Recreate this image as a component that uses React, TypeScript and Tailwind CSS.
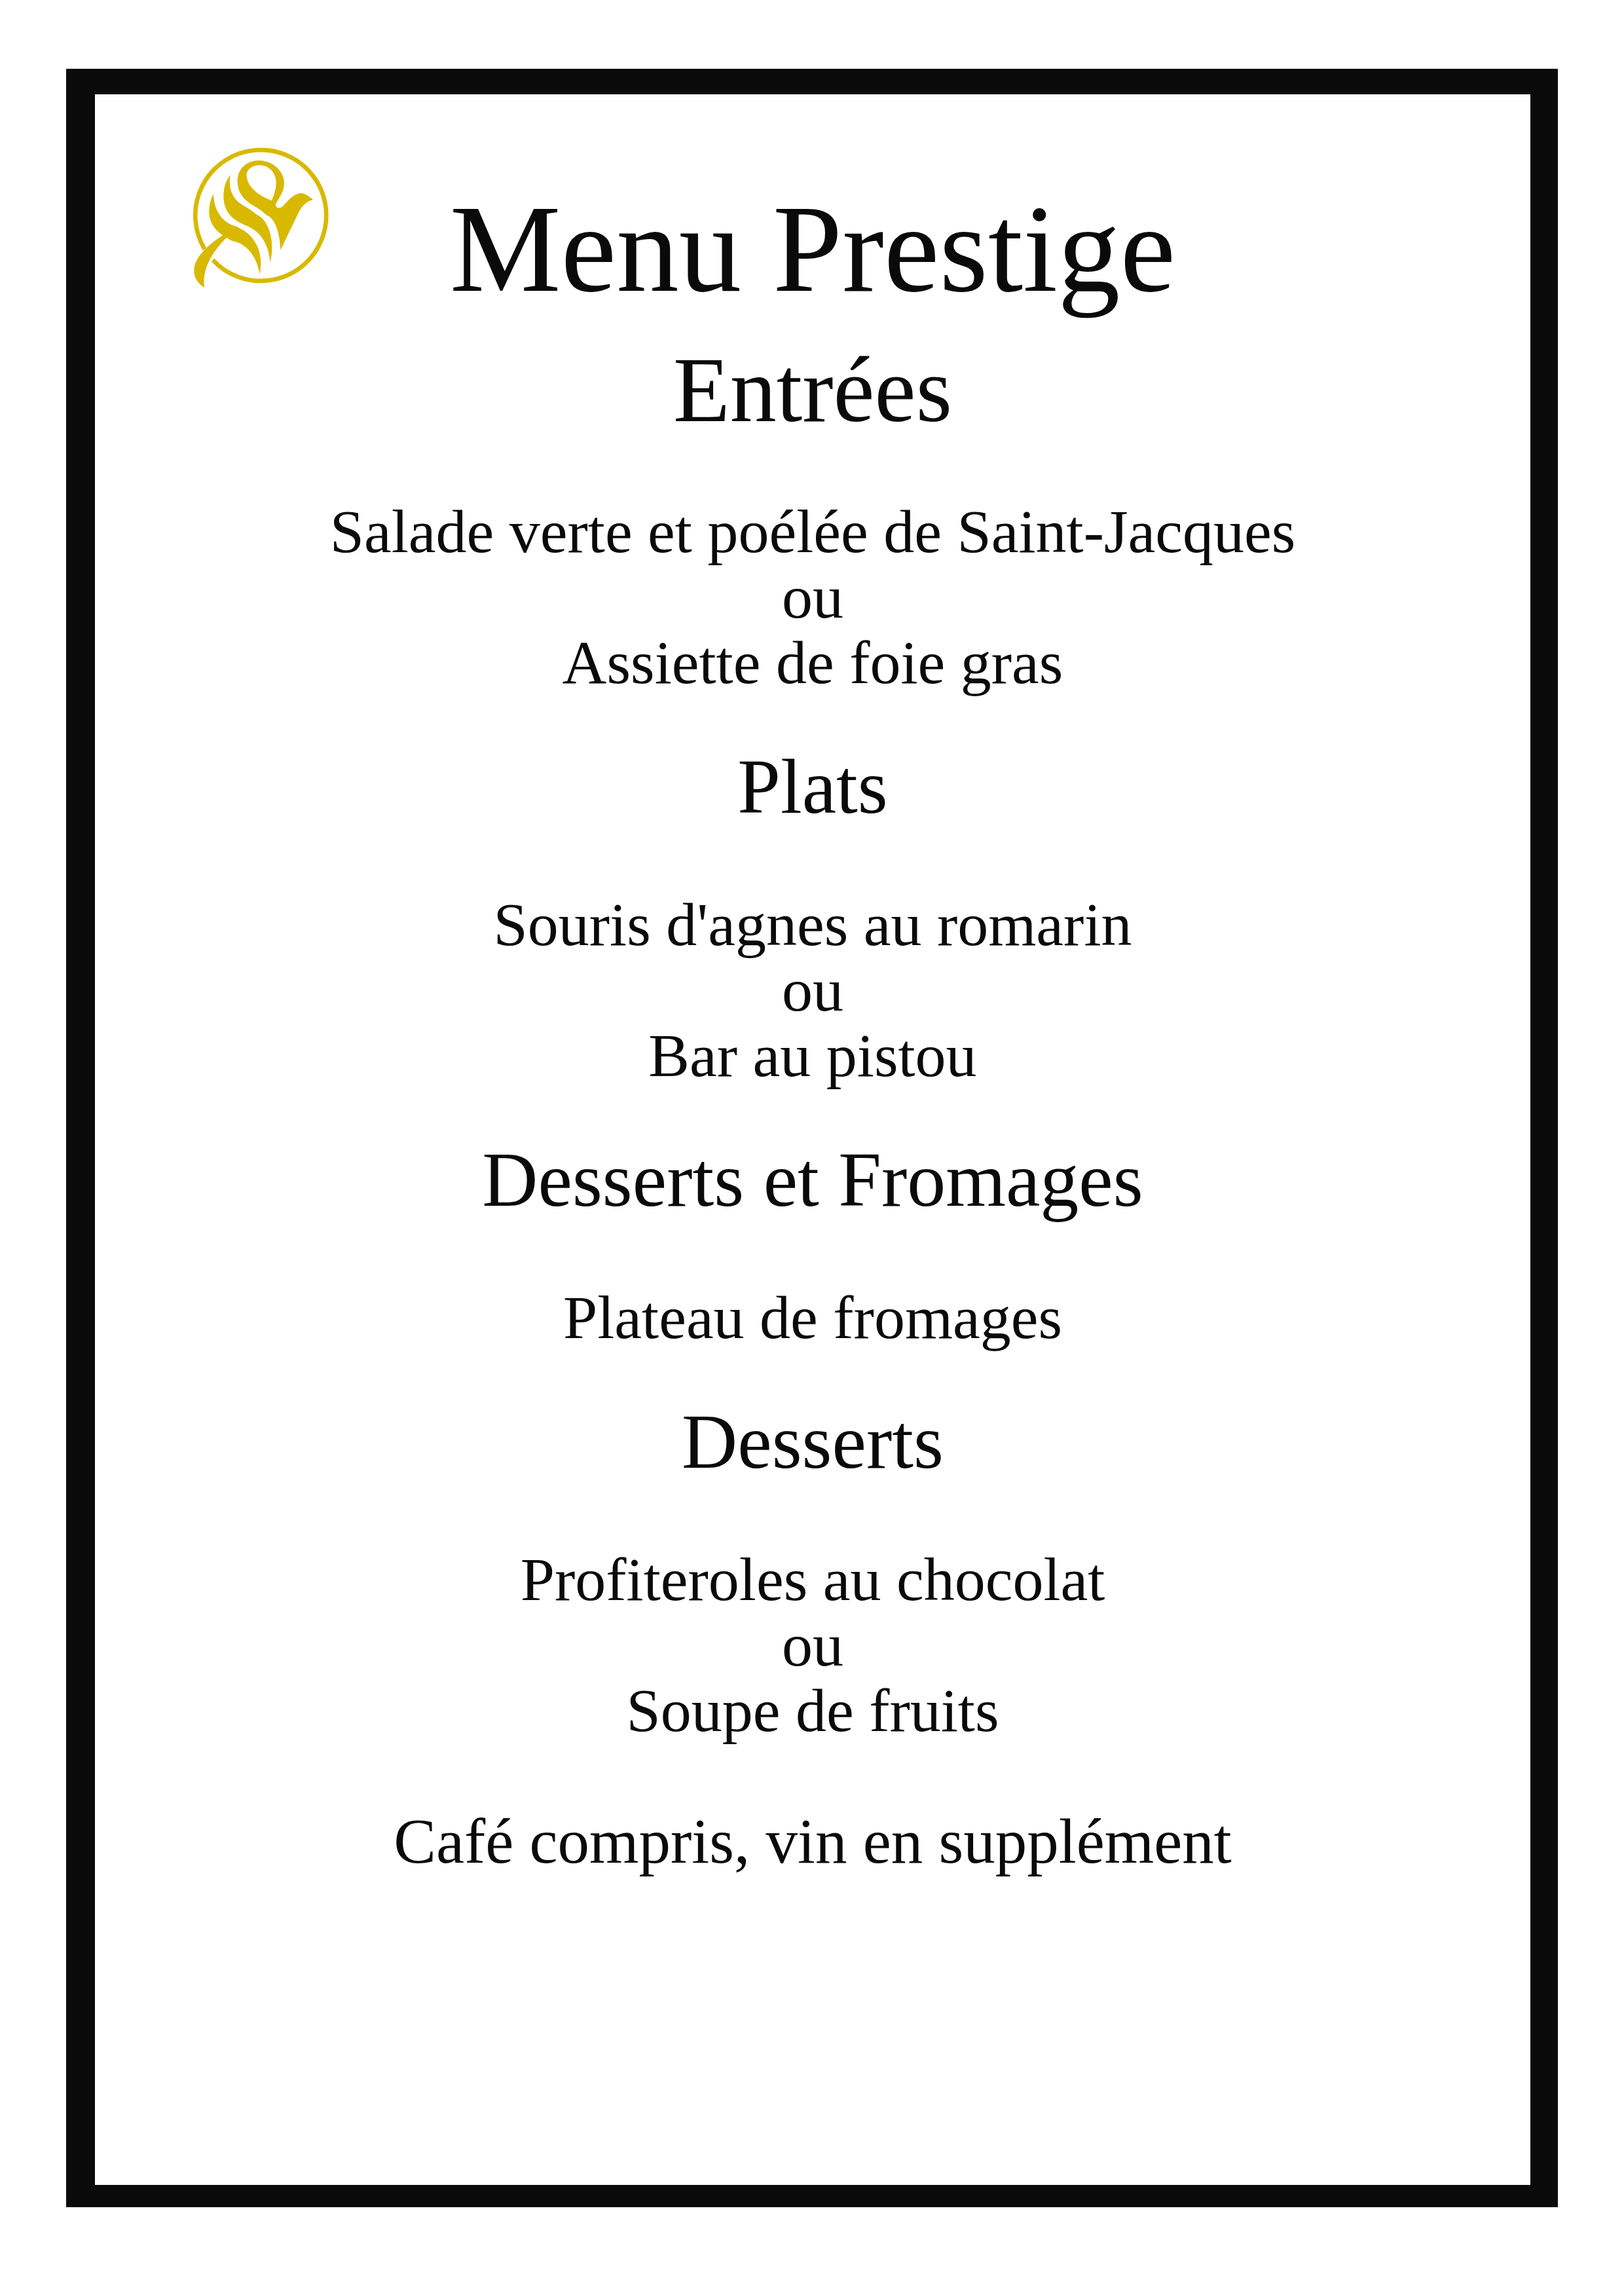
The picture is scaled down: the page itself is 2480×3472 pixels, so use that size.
const sections = [
  { title: "Entrées", head: "mt-[65px] mb-[116px] text-[142px]", items: ["Salade verte et poélée de Saint-Jacques", "ou", "Assiette de foie gras"] },
  { title: "Plats", head: "mb-[109px] text-[118px]", items: ["Souris d'agnes au romarin", "ou", "Bar au pistou"] },
  { title: "Desserts et Fromages", head: "mb-[109px] text-[118px]", items: ["Plateau de fromages"] },
  { title: "Desserts", head: "mb-[109px] text-[118px]", items: ["Profiteroles au chocolat", "ou", "Soupe de fruits"] },
];

function Logo() {
  return (
    <svg viewBox="0 0 810 810" className="absolute left-[115px] top-[56px] w-[270px] h-[270px]" fill="#d8b900">
      {/* ring, cut where the swoosh crosses it */}
      <path
        d="M158 542 A300 300 0 1 1 195 591"
        fill="none"
        stroke="#d8b900"
        strokeWidth="20"
      />
      {/* loop and bird */}
      <path
        fillRule="evenodd"
        d="M505 545 C502 470 482 400 442 386 L416 364 C375 335 312 315 308 235 C305 170 355 135 405 135 C470 135 522 185 522 240 C522 280 495 310 483 335 C480 352 500 358 515 345 C535 325 565 285 600 285 C620 285 640 305 655 315 C630 320 610 335 590 370 Z M465 318 C420 305 352 262 350 205 C349 175 375 157 410 157 C455 157 487 195 485 240 C484 268 475 295 465 318 Z"
      />
      {/* middle stroke */}
      <path d="M275 202 C268 250 275 305 330 338 C355 352 375 364 390 379 L416 395 C455 430 480 510 458 603 C452 540 430 465 345 432 L330 425 C285 405 245 370 244 300 C244 260 255 225 275 202 Z" />
      {/* left stroke and swoosh */}
      <path d="M198 288 C198 350 230 420 304 437 L320 447 C390 480 430 560 410 657 C400 590 360 520 290 505 C278 502 268 495 258 488 C215 530 140 620 157 718 C120 695 105 665 110 625 C118 575 175 520 240 478 C195 445 175 410 178 360 C180 330 188 305 198 288 Z" />
    </svg>
  );
}

export default function App() {
  return (
    <div className="min-h-[3472px] w-[2480px] bg-white pl-[101px] pt-[105px] text-[#0a0a0a]" style={{ fontFamily: '"Liberation Serif", serif' }}>
      <main className="relative flex h-[3265px] w-[2278px] flex-col items-center border-[#0a0a0a] border-t-[39px] border-r-[42px] border-b-[34px] border-l-[44px] pt-[136px] text-center">
        <Logo />
        <h1 className="text-[191px] leading-[200px] font-normal">Menu Prestige</h1>
        {sections.map((s) => (
          <section key={s.title} className="mb-[91px]">
            <h2 className={`leading-[100px] font-normal ${s.head}`}>{s.title}</h2>
            {s.items.map((item, i) => (
              <p key={i} className="text-[94px] leading-[100px]">{item}</p>
            ))}
          </section>
        ))}
        <p className="mt-[10px] text-[97px] leading-[100px]">Café compris, vin en supplément</p>
      </main>
    </div>
  );
}
